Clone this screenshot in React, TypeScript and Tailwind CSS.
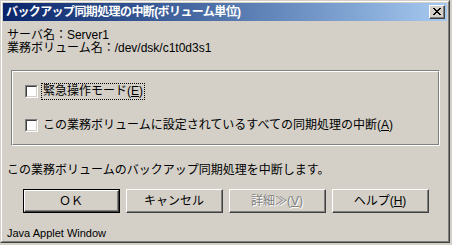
import React from "react";

const FONT = { fontFamily: '"Liberation Sans", "Noto Sans CJK JP", sans-serif' };

function Checkbox() {
  return (
    <div className="w-[13px] h-[13px] shrink-0 border-t border-l border-t-[#808080] border-l-[#808080] border-b border-r border-b-white border-r-white">
      <div className="w-full h-full bg-white border-t border-l border-t-[#404040] border-l-[#404040] border-b border-r border-b-[#d4d0c8] border-r-[#d4d0c8]" />
    </div>
  );
}

function Btn({ children, def, disabled }: { children: React.ReactNode; def?: boolean; disabled?: boolean }) {
  const inner = (
    <div className="w-full h-full border-t border-l border-t-white border-l-white border-b border-r border-b-[#404040] border-r-[#404040]">
      <div className="w-full h-full border-b border-r border-b-[#808080] border-r-[#808080] flex items-center justify-center">
        <span
          className={disabled ? "text-[#808080] [text-shadow:1px_1px_0_#ffffff]" : "text-black"}
        >
          {children}
        </span>
      </div>
    </div>
  );
  if (def) {
    return <div className="w-[97px] h-[24px] border border-black">{inner}</div>;
  }
  return <div className="w-[97px] h-[24px]">{inner}</div>;
}

export default function App() {
  return (
    <div className="w-[452px] h-[245px] bg-[#d4d0c8] text-[12px] text-black" style={FONT}>
      <div className="w-[450px] h-[243px] border-t border-l border-t-[#d4d0c8] border-l-[#d4d0c8] border-b border-r border-b-[#404040] border-r-[#404040]">
        <div className="w-full h-full border-t border-l border-t-white border-l-white border-b border-r border-b-[#808080] border-r-[#808080] p-[1px] flex flex-col">
          {/* Title bar */}
          <div className="h-[18px] flex items-center justify-between bg-gradient-to-r from-[#0a246a] to-[#a6caf0] pl-[3px] pr-[2px]">
            <span className="text-white font-bold leading-[14px] text-[12px] tracking-[-0.6px]">
              バックアップ同期処理の中断(ボリューム単位)
            </span>
            <div className="w-[16px] h-[14px] border-t border-l border-t-white border-l-white border-b border-r border-b-[#404040] border-r-[#404040] bg-[#d4d0c8]">
              <div className="w-full h-full border-b border-r border-b-[#808080] border-r-[#808080] flex items-center justify-center">
                <svg width="8" height="7" viewBox="0 0 8 7" shapeRendering="crispEdges">
                  <path d="M0 0h2v1h-2zM6 0h2v1h-2zM1 1h2v1h-2zM5 1h2v1h-2zM2 2h4v1h-4zM3 3h2v1h-2zM2 4h4v1h-4zM1 5h2v1h-2zM5 5h2v1h-2zM0 6h2v1h-2zM6 6h2v1h-2z" fill="#000" />
                </svg>
              </div>
            </div>
          </div>

          {/* Body */}
          <div className="flex-1 flex flex-col pl-[4px] pt-[8px]">
            <div className="leading-[13px]">サーバ名：Server1</div>
            <div className="leading-[13px]">業務ボリューム名：/dev/dsk/c1t0d3s1</div>

            <div className="ml-[4px] mt-[15px] w-[429px] border-t border-l border-t-[#808080] border-l-[#808080] border-b border-r border-b-white border-r-white">
              <div className="border-t border-l border-t-white border-l-white border-b border-r border-b-[#808080] border-r-[#808080] pt-[11px] pb-[10px] pl-[12px] flex flex-col gap-[17px]">
                <div className="h-[17px] flex items-center">
                  <Checkbox />
                  <span className="ml-[3px] h-[17px] px-[1px] leading-[15px] border border-dotted border-black">
                    緊急操作モード(<span className="underline">E</span>)
                  </span>
                </div>
                <div className="h-[17px] flex items-center">
                  <Checkbox />
                  <span className="ml-[3px] px-[2px] leading-[15px]">
                    この業務ボリュームに設定されているすべての同期処理の中断(<span className="underline">A</span>)
                  </span>
                </div>
              </div>
            </div>

            <div className="mt-[17px] leading-[14px]">この業務ボリュームのバックアップ同期処理を中断します。</div>

            <div className="mt-[12px] ml-[16px] flex gap-[6px]">
              <Btn def>ＯＫ</Btn>
              <Btn>キャンセル</Btn>
              <Btn disabled>
                詳細≫(<span className="underline">V</span>)
              </Btn>
              <Btn>
                ヘルプ(<span className="underline">H</span>)
              </Btn>
            </div>

            <div className="mt-[14px] leading-[13px] text-[11px] pl-[0px]">Java Applet Window</div>
          </div>
        </div>
      </div>
    </div>
  );
}
